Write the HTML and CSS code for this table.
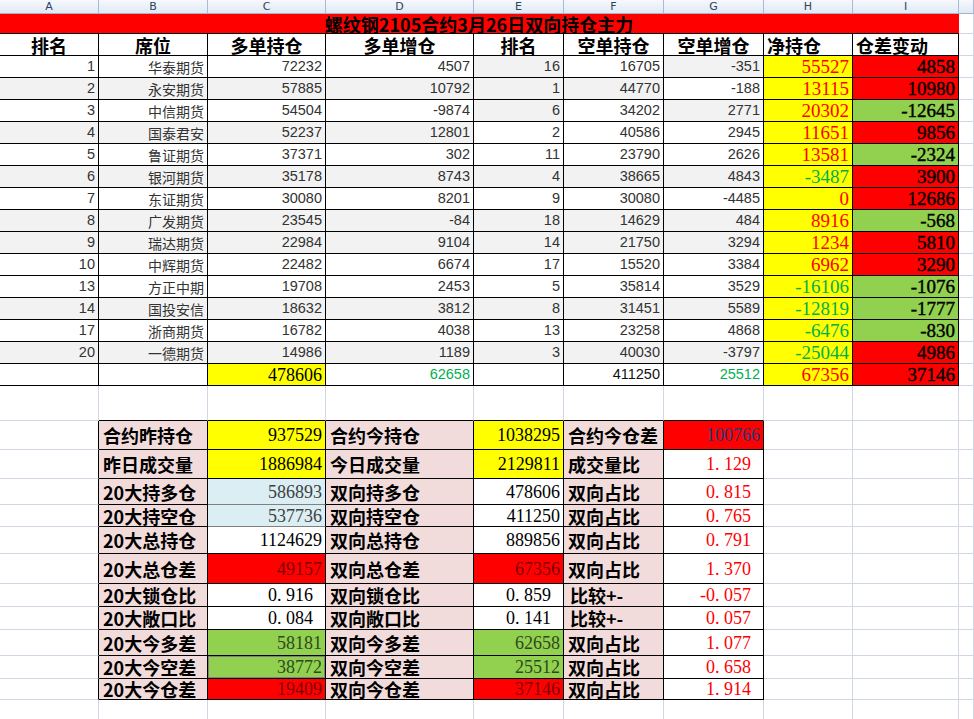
FILE: index.html
```html
<!DOCTYPE html>
<html lang="zh-CN">
<head>
<meta charset="utf-8">
<title>螺纹钢2105合约3月26日双向持仓主力</title>
<link rel="stylesheet" href="styles.css">
</head>
<body>
<div class="sheet">
  <!-- column letters -->
  <div class="c ch">A</div><div class="c ch">B</div><div class="c ch">C</div><div class="c ch">D</div><div class="c ch">E</div><div class="c ch">F</div><div class="c ch">G</div><div class="c ch">H</div><div class="c ch">I</div><div class="c ch"></div>

  <!-- title -->
  <div class="c title">螺纹钢2105合约3月26日双向持仓主力</div><div class="c"></div>

  <!-- header -->
  <div class="c k hd">排名</div><div class="c k hd">席位</div><div class="c k hd">多单持仓</div><div class="c k hd">多单增仓</div><div class="c k hd">排名</div><div class="c k hd">空单持仓</div><div class="c k hd">空单增仓</div><div class="c k hd hl">净持仓</div><div class="c k hd hl">仓差变动</div><div class="c"></div>

  <!-- data rows -->
  <div class="c k d r">1</div><div class="c k nm r">华泰期货</div><div class="c k d r">72232</div><div class="c k d r">4507</div><div class="c k d r g">16</div><div class="c k d r">16705</div><div class="c k d r g">-351</div><div class="c k h r pos">55527</div><div class="c k iv r ip">4858</div><div class="c"></div>

  <div class="c k d r g">2</div><div class="c k nm r g">永安期货</div><div class="c k d r g">57885</div><div class="c k d r g">10792</div><div class="c k d r g">1</div><div class="c k d r g">44770</div><div class="c k d r">-188</div><div class="c k h r pos">13115</div><div class="c k iv r ip">10980</div><div class="c"></div>

  <div class="c k d r">3</div><div class="c k nm r">中信期货</div><div class="c k d r">54504</div><div class="c k d r">-9874</div><div class="c k d r g">6</div><div class="c k d r">34202</div><div class="c k d r g">2771</div><div class="c k h r pos">20302</div><div class="c k iv r in">-12645</div><div class="c"></div>

  <div class="c k d r g">4</div><div class="c k nm r g">国泰君安</div><div class="c k d r g">52237</div><div class="c k d r g">12801</div><div class="c k d r">2</div><div class="c k d r">40586</div><div class="c k d r">2945</div><div class="c k h r pos">11651</div><div class="c k iv r ip">9856</div><div class="c"></div>

  <div class="c k d r">5</div><div class="c k nm r">鲁证期货</div><div class="c k d r">37371</div><div class="c k d r">302</div><div class="c k d r">11</div><div class="c k d r">23790</div><div class="c k d r">2626</div><div class="c k h r pos">13581</div><div class="c k iv r in">-2324</div><div class="c"></div>

  <div class="c k d r g">6</div><div class="c k nm r g">银河期货</div><div class="c k d r g">35178</div><div class="c k d r g">8743</div><div class="c k d r g">4</div><div class="c k d r g">38665</div><div class="c k d r g">4843</div><div class="c k h r neg">-3487</div><div class="c k iv r ip">3900</div><div class="c"></div>

  <div class="c k d r">7</div><div class="c k nm r">东证期货</div><div class="c k d r">30080</div><div class="c k d r">8201</div><div class="c k d r">9</div><div class="c k d r">30080</div><div class="c k d r">-4485</div><div class="c k h r pos">0</div><div class="c k iv r ip">12686</div><div class="c"></div>

  <div class="c k d r g">8</div><div class="c k nm r g">广发期货</div><div class="c k d r g">23545</div><div class="c k d r g">-84</div><div class="c k d r g">18</div><div class="c k d r g">14629</div><div class="c k d r g">484</div><div class="c k h r pos">8916</div><div class="c k iv r in">-568</div><div class="c"></div>

  <div class="c k d r g">9</div><div class="c k nm r g">瑞达期货</div><div class="c k d r g">22984</div><div class="c k d r g">9104</div><div class="c k d r g">14</div><div class="c k d r g">21750</div><div class="c k d r g">3294</div><div class="c k h r pos">1234</div><div class="c k iv r ip">5810</div><div class="c"></div>

  <div class="c k d r">10</div><div class="c k nm r">中辉期货</div><div class="c k d r">22482</div><div class="c k d r">6674</div><div class="c k d r">17</div><div class="c k d r">15520</div><div class="c k d r">3384</div><div class="c k h r pos">6962</div><div class="c k iv r ip">3290</div><div class="c"></div>

  <div class="c k d r">13</div><div class="c k nm r">方正中期</div><div class="c k d r">19708</div><div class="c k d r">2453</div><div class="c k d r">5</div><div class="c k d r">35814</div><div class="c k d r">3529</div><div class="c k h r neg">-16106</div><div class="c k iv r in">-1076</div><div class="c"></div>

  <div class="c k d r g">14</div><div class="c k nm r g">国投安信</div><div class="c k d r g">18632</div><div class="c k d r g">3812</div><div class="c k d r g">8</div><div class="c k d r g">31451</div><div class="c k d r g">5589</div><div class="c k h r neg">-12819</div><div class="c k iv r in">-1777</div><div class="c"></div>

  <div class="c k d r">17</div><div class="c k nm r">浙商期货</div><div class="c k d r">16782</div><div class="c k d r">4038</div><div class="c k d r">13</div><div class="c k d r">23258</div><div class="c k d r">4868</div><div class="c k h r neg">-6476</div><div class="c k iv r in">-830</div><div class="c"></div>

  <div class="c k d r g">20</div><div class="c k nm r g">一德期货</div><div class="c k d r g">14986</div><div class="c k d r g">1189</div><div class="c k d r g">3</div><div class="c k d r g">40030</div><div class="c k d r g">-3797</div><div class="c k h r neg">-25044</div><div class="c k iv r ip">4986</div><div class="c"></div>

  <!-- total row -->
  <div class="c k"></div><div class="c k"></div><div class="c k sn y">478606</div><div class="c k d r grn">62658</div><div class="c k"></div><div class="c k d r blk">411250</div><div class="c k d r grn">25512</div><div class="c k h r pos">67356</div><div class="c k iv r ip">37146</div><div class="c"></div>

  <!-- empty row -->
  <div class="c"></div><div class="c kb"></div><div class="c kb"></div><div class="c kb"></div><div class="c kb"></div><div class="c kb"></div><div class="c kb"></div><div class="c"></div><div class="c"></div><div class="c"></div>

  <!-- summary -->
  <div class="c kr"></div><div class="c k lb">合约昨持仓</div><div class="c k sn y">937529</div><div class="c k lb">合约今持仓</div><div class="c k sn y">1038295</div><div class="c k lb">合约今仓差</div><div class="c k sn rd navy">100766</div><div class="c"></div><div class="c"></div><div class="c"></div>

  <div class="c kr"></div><div class="c k lb">昨日成交量</div><div class="c k sn y">1886984</div><div class="c k lb">今日成交量</div><div class="c k sn y">2129811</div><div class="c k lb">成交量比</div><div class="c k sn dec red">1<span class="dot">.</span>129</div><div class="c"></div><div class="c"></div><div class="c"></div>

  <div class="c kr"></div><div class="c k lb">20大持多仓</div><div class="c k sn lblue gb">586893</div><div class="c k lb">双向持多仓</div><div class="c k sn">478606</div><div class="c k lb">双向占比</div><div class="c k sn dec red">0<span class="dot">.</span>815</div><div class="c"></div><div class="c"></div><div class="c"></div>

  <div class="c kr"></div><div class="c k lb">20大持空仓</div><div class="c k sn lblue gb">537736</div><div class="c k lb">双向持空仓</div><div class="c k sn">411250</div><div class="c k lb">双向占比</div><div class="c k sn dec red">0<span class="dot">.</span>765</div><div class="c"></div><div class="c"></div><div class="c"></div>

  <div class="c kr"></div><div class="c k lb">20大总持仓</div><div class="c k sn">1124629</div><div class="c k lb">双向总持仓</div><div class="c k sn">889856</div><div class="c k lb">双向占比</div><div class="c k sn dec red">0<span class="dot">.</span>791</div><div class="c"></div><div class="c"></div><div class="c"></div>

  <div class="c kr"></div><div class="c k lb">20大总仓差</div><div class="c k sn rd dred">49157</div><div class="c k lb">双向总仓差</div><div class="c k sn rd dred">67356</div><div class="c k lb">双向占比</div><div class="c k sn dec red">1<span class="dot">.</span>370</div><div class="c"></div><div class="c"></div><div class="c"></div>

  <div class="c kr"></div><div class="c k lb">20大锁仓比</div><div class="c k sn dec">0<span class="dot">.</span>916</div><div class="c k lb">双向锁仓比</div><div class="c k sn dec">0<span class="dot">.</span>859</div><div class="c k lb lbi">比较+-</div><div class="c k sn dec red">-0<span class="dot">.</span>057</div><div class="c"></div><div class="c"></div><div class="c"></div>

  <div class="c kr"></div><div class="c k lb">20大敞口比</div><div class="c k sn dec">0<span class="dot">.</span>084</div><div class="c k lb">双向敞口比</div><div class="c k sn dec">0<span class="dot">.</span>141</div><div class="c k lb lbi">比较+-</div><div class="c k sn dec red">0<span class="dot">.</span>057</div><div class="c"></div><div class="c"></div><div class="c"></div>

  <div class="c kr"></div><div class="c k lb">20大今多差</div><div class="c k sn gr dgrn">58181</div><div class="c k lb">双向今多差</div><div class="c k sn gr dgrn">62658</div><div class="c k lb">双向占比</div><div class="c k sn dec red">1<span class="dot">.</span>077</div><div class="c"></div><div class="c"></div><div class="c"></div>

  <div class="c kr"></div><div class="c k lb">20大今空差</div><div class="c k sn gr dgrn sel">38772</div><div class="c k lb">双向今空差</div><div class="c k sn gr dgrn">25512</div><div class="c k lb">双向占比</div><div class="c k sn dec red">0<span class="dot">.</span>658</div><div class="c"></div><div class="c"></div><div class="c"></div>

  <div class="c kr"></div><div class="c k lb">20大今仓差</div><div class="c k sn rd dred">19409</div><div class="c k lb">双向今仓差</div><div class="c k sn rd dred">37146</div><div class="c k lb">双向占比</div><div class="c k sn dec red">1<span class="dot">.</span>914</div><div class="c"></div><div class="c"></div><div class="c"></div>

  <!-- trailing row -->
  <div class="c"></div><div class="c"></div><div class="c"></div><div class="c"></div><div class="c"></div><div class="c"></div><div class="c"></div><div class="c"></div><div class="c"></div><div class="c"></div>
</div>
</body>
</html>
```

FILE: styles.css
```css
html, body {
  margin: 0;
  padding: 0;
  background: #fff;
}

.sheet {
  display: grid;
  grid-template-columns: 99px 109px 118px 148px 90px 100px 100px 89px 106px 15px;
  grid-template-rows: 14px 20px repeat(16, 22px) 35px 29px 29px 26px 22px 27px 30px 23px 23px 26px 23px 21px 20px;
  width: 974px;
  height: 719px;
  overflow: hidden;
  font-family: "Liberation Sans", "Noto Sans CJK SC", sans-serif;
  color: #000;
}

.c {
  box-sizing: border-box;
  border-right: 1px solid #d0d7e5;
  border-bottom: 1px solid #d0d7e5;
  display: flex;
  align-items: center;
  padding: 0 3px;
  white-space: nowrap;
  line-height: 1;
  min-width: 0;
}

.r { justify-content: flex-end; }

/* black borders */
.k { border-right-color: #000; border-bottom-color: #000; }
.kb { border-bottom-color: #000; }
.kr { border-right-color: #000; }

/* column letters */
.ch {
  background: linear-gradient(#f6f8fc, #e2e9f4);
  border-right-color: #a7bcd4;
  border-bottom-color: #9eb6ce;
  justify-content: center;
  font-family: "DejaVu Sans", sans-serif;
  font-size: 11px;
  color: #2b4260;
}

/* title */
.title {
  grid-column: span 9;
  background: #f00;
  border-right-color: #f00;
  border-bottom-color: #000;
  justify-content: center;
  font-family: "Noto Sans CJK SC", sans-serif;
  font-weight: 600;
  font-size: 18px;
}

/* header */
.hd {
  justify-content: center;
  font-family: "Noto Sans CJK SC", sans-serif;
  font-weight: 600;
  font-size: 18px;
}
.hl { justify-content: flex-start; padding-left: 3px; }

/* data */
.d {
  font-size: 14.5px;
  color: #333;
}
.nm {
  font-family: "Noto Sans CJK SC", sans-serif;
  font-size: 14px;
  color: #333;
}
.g { background: #f2f2f2; }
.grn { color: #00b050; }
.blk { color: #111; }

.h {
  background: #ff0;
  font-family: "Liberation Serif", serif;
  font-size: 19px;
}
.pos { color: #f00; }
.neg { color: #00b050; }

.iv {
  font-family: "Liberation Serif", serif;
  font-size: 19px;
  color: #000;
  -webkit-text-stroke: 0.4px #000;
}
.ip { background: #f00; }
.in { background: #92d050; }

/* summary */
.lb {
  background: #f2dcdb;
  font-family: "Noto Sans CJK SC", sans-serif;
  font-weight: 600;
  font-size: 18px;
  padding-left: 4px;
}
.lbi { padding-left: 6px; }

.sn {
  justify-content: flex-end;
  font-family: "Liberation Serif", serif;
  font-size: 18px;
  color: #000;
}
.dec { padding-right: 12px; }
.dot { display: inline-block; width: 9px; }

.y { background: #ff0; }
.rd { background: #f00; }
.gr { background: #92d050; }
.lblue { background: #daeef3; color: #404040; }
.gb { border-bottom-color: #808080; }
.sel { box-shadow: inset 0 0 0 1px #808080; }

.navy { color: #1f3a78; }
.red { color: #f00; }
.dred { color: #800000; }
.dgrn { color: #2d4a1c; }
```
